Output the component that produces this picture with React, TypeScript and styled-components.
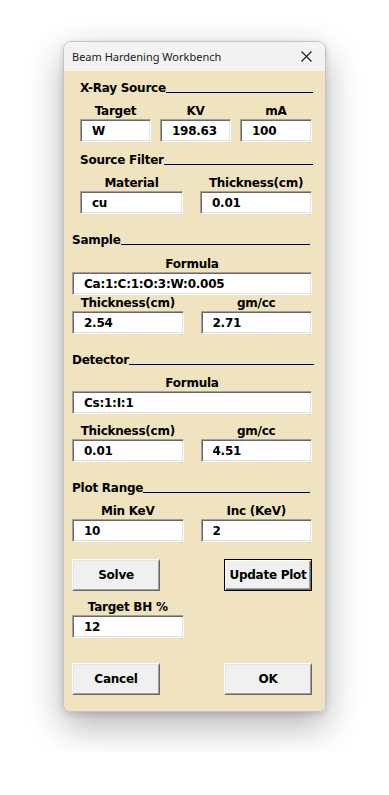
import React from "react";
import styled, { createGlobalStyle } from "styled-components";

const GlobalStyle = createGlobalStyle`
  html, body {
    margin: 0;
    padding: 0;
    background: #ffffff;
  }
  * {
    box-sizing: border-box;
  }
`;

const Page = styled.div`
  padding-top: 41px;
  padding-bottom: 40px;
`;

const Window = styled.div`
  width: 263px;
  margin: 0 auto;
  border: 1px solid #c4c4c4;
  border-radius: 8px;
  overflow: hidden;
  box-shadow: 0 14px 36px rgba(0, 0, 0, 0.3), 0 2px 6px rgba(0, 0, 0, 0.14);
`;

const TitleBar = styled.div`
  height: 29px;
  background: #f3f3f3;
  display: flex;
  align-items: center;
  justify-content: space-between;
  padding: 0 9px 0 8px;
  font-family: "Noto Sans", "Liberation Sans", sans-serif;
  font-size: 11px;
  color: #1a1a1a;
`;

const CloseBtn = styled.div`
  width: 20px;
  height: 20px;
  display: flex;
  align-items: center;
  justify-content: center;
`;

const Body = styled.div`
  background: #efe4bf;
  padding: 9px 13px 16px 8px;
  font-family: "DejaVu Sans", Verdana, sans-serif;
  font-weight: bold;
  font-size: 12px;
  letter-spacing: -0.25px;
  color: #000;
`;

const Section = styled.div<{ $indent?: number; $top?: number }>`
  padding-left: ${(p) => p.$indent ?? 0}px;
  margin-top: ${(p) => p.$top ?? 0}px;
`;

const Heading = styled.div<{ $trail?: number }>`
  display: flex;
  align-items: baseline;
  line-height: 16px;
  height: 16px;
  margin-right: ${(p) => p.$trail ?? 0}px;
`;

const HeadLine = styled.span`
  flex: 1;
  height: 0;
  border-bottom: 1px solid #000;
  transform: translateY(1px);
`;

const Row = styled.div<{ $cols: string; $gap: number; $top?: number }>`
  display: grid;
  grid-template-columns: ${(p) => p.$cols};
  column-gap: ${(p) => p.$gap}px;
  margin-top: ${(p) => p.$top ?? 0}px;
`;

const Field = styled.div`
  display: flex;
  flex-direction: column;
`;

const Label = styled.div`
  line-height: 16px;
  height: 16px;
  text-align: center;
  white-space: nowrap;
`;

const Input = styled.input`
  height: 23px;
  width: 100%;
  background: #fff;
  border: 1px solid;
  border-color: #a0a0a0 #ffffff #ffffff #a0a0a0;
  box-shadow: inset 1px 1px 0 #696969, inset -1px -1px 0 #e3e3e3;
  padding: 0 0 0 11px;
  font: inherit;
  letter-spacing: inherit;
  color: #000;
  outline: none;
`;

const ButtonRow = styled.div<{ $top: number }>`
  display: flex;
  justify-content: space-between;
  margin-top: ${(p) => p.$top}px;
`;

const Button = styled.button<{ $default?: boolean }>`
  width: 88px;
  height: 32px;
  background: #f0f0f0;
  font: inherit;
  letter-spacing: inherit;
  color: #000;
  padding: 0;
  border: 1px solid;
  border-color: ${(p) =>
    p.$default ? "#000" : "#ffffff #696969 #696969 #ffffff"};
  box-shadow: ${(p) =>
    p.$default
      ? "inset 1px 1px 0 #ffffff, inset -1px -1px 0 #696969, inset -2px -2px 0 #a0a0a0"
      : "inset 1px 1px 0 #e3e3e3, inset -1px -1px 0 #a0a0a0"};
`;

interface FieldProps {
  label?: string;
  value?: string;
}

function LabeledInput({ label, value }: FieldProps) {
  return (
    <Field>
      <Label>{label}</Label>
      <Input defaultValue={value} />
    </Field>
  );
}

function SectionHeading({ title, trail }: { title: string; trail?: number }) {
  return (
    <Heading $trail={trail}>
      <span>{title}</span>
      <HeadLine />
    </Heading>
  );
}

export default function App() {
  return (
    <>
      <GlobalStyle />
      <Page>
        <Window>
          <TitleBar>
            <span>Beam Hardening Workbench</span>
            <CloseBtn>
              <svg width="11" height="11" viewBox="0 0 11 11">
                <path d="M0.5 0.5 L10.5 10.5 M10.5 0.5 L0.5 10.5" stroke="#1a1a1a" strokeWidth="1.1" />
              </svg>
            </CloseBtn>
          </TitleBar>
          <Body>
            <Section $indent={8}>
              <SectionHeading title="X-Ray Source" trail={-1} />
              <Row $cols="71px 71px 1fr" $gap={9} $top={7}>
                <LabeledInput label="Target" value="W" />
                <LabeledInput label="KV" value="198.63" />
                <LabeledInput label="mA" value="100" />
              </Row>
            </Section>

            <Section $indent={8} $top={10}>
              <SectionHeading title="Source Filter" trail={-1} />
              <Row $cols="103px 1fr" $gap={17} $top={7}>
                <LabeledInput label="Material" value="cu" />
                <LabeledInput label="Thickness(cm)" value="0.01" />
              </Row>
            </Section>

            <Section $top={18}>
              <SectionHeading title="Sample" trail={2} />
              <Row $cols="1fr" $gap={0} $top={8}>
                <LabeledInput label="Formula" value="Ca:1:C:1:O:3:W:0.005" />
              </Row>
              <Row $cols="1fr 1fr" $gap={17}>
                <LabeledInput label="Thickness(cm)" value="2.54" />
                <LabeledInput label="gm/cc" value="2.71" />
              </Row>
            </Section>

            <Section $top={18}>
              <SectionHeading title="Detector" trail={-2} />
              <Row $cols="1fr" $gap={0} $top={7}>
                <LabeledInput label="Formula" value="Cs:1:I:1" />
              </Row>
              <Row $cols="1fr 1fr" $gap={17} $top={9}>
                <LabeledInput label="Thickness(cm)" value="0.01" />
                <LabeledInput label="gm/cc" value="4.51" />
              </Row>
            </Section>

            <Section $top={18}>
              <SectionHeading title="Plot Range" trail={2} />
              <Row $cols="1fr 1fr" $gap={17} $top={7}>
                <LabeledInput label="Min KeV" value="10" />
                <LabeledInput label="Inc (KeV)" value="2" />
              </Row>
            </Section>

            <ButtonRow $top={17}>
              <Button>Solve</Button>
              <Button $default>Update Plot</Button>
            </ButtonRow>

            <Row $cols="1fr 1fr" $gap={17} $top={8}>
              <LabeledInput label="Target BH %" value="12" />
            </Row>

            <ButtonRow $top={25}>
              <Button>Cancel</Button>
              <Button>OK</Button>
            </ButtonRow>
          </Body>
        </Window>
      </Page>
    </>
  );
}
